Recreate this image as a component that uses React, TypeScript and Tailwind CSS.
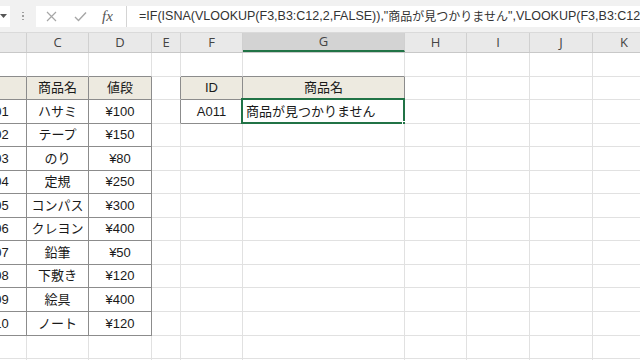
import React from "react";

const cols = [
  { key: "B", w: "w-[66px]" },
  { key: "C", w: "w-[62px]" },
  { key: "D", w: "w-[63px]" },
  { key: "E", w: "w-[29px]" },
  { key: "F", w: "w-[62px]" },
  { key: "G", w: "w-[162px]" },
  { key: "H", w: "w-[62px]" },
  { key: "I", w: "w-[63px]" },
  { key: "J", w: "w-[63px]" },
  { key: "K", w: "w-[63px]" },
];

const items = [
  ["A001", "ハサミ", "¥100"],
  ["A002", "テープ", "¥150"],
  ["A003", "のり", "¥80"],
  ["A004", "定規", "¥250"],
  ["A005", "コンパス", "¥300"],
  ["A006", "クレヨン", "¥400"],
  ["A007", "鉛筆", "¥50"],
  ["A008", "下敷き", "¥120"],
  ["A009", "絵具", "¥400"],
  ["A010", "ノート", "¥120"],
];

// row 1..14, col index 0..9 (B..K)
function cellValue(r: number, c: number): string {
  if (r === 2) {
    if (c === 0) return "ID";
    if (c === 1) return "商品名";
    if (c === 2) return "値段";
    if (c === 4) return "ID";
    if (c === 5) return "商品名";
  }
  if (r >= 3 && r <= 12 && c <= 2) return items[r - 3][c];
  if (r === 3 && c === 4) return "A011";
  return "";
}

function inTable(r: number, c: number) {
  return (r >= 2 && r <= 12 && c <= 2) || (r >= 2 && r <= 3 && (c === 4 || c === 5));
}

function borderClass(r: number, c: number) {
  const right = inTable(r, c) || inTable(r, c + 1);
  const bottom = inTable(r, c) || inTable(r + 1, c);
  if (right && bottom) return "border-r border-b border-r-[#8c8c8c] border-b-[#8c8c8c]";
  if (right) return "border-r border-b border-r-[#8c8c8c] border-b-[#e1e1e1]";
  if (bottom) return "border-r border-b border-r-[#e1e1e1] border-b-[#8c8c8c]";
  return "border-r border-b border-r-[#e1e1e1] border-b-[#e1e1e1]";
}

function Cell({ r, c }: { r: number; c: number }) {
  const header = r === 2 && inTable(r, c);
  const selected = r === 3 && c === 5;
  return (
    <div
      className={`${cols[c].w} shrink-0 relative flex items-center ${
        selected ? "justify-start pl-[3px]" : "justify-center"
      } ${header ? "bg-[#edeae0]" : "bg-white"} ${borderClass(r, c)}`}
    >
      <span className="whitespace-nowrap">{selected ? "商品が見つかりません" : cellValue(r, c)}</span>
      {selected && (
        <div className="absolute left-[-2px] top-[-2px] right-[-1px] bottom-[-1px] border-2 border-[#217346]">
          <div className="absolute right-[-4px] bottom-[-4px] w-[5px] h-[5px] bg-[#217346] border border-white" />
        </div>
      )}
    </div>
  );
}

export default function App() {
  const rows = Array.from({ length: 14 }, (_, i) => i + 1);
  return (
    <div className="w-[640px] h-[360px] overflow-hidden bg-white text-[#1a1a1a] font-['Liberation_Sans','Noto_Sans_CJK_JP',sans-serif]">
      {/* formula bar */}
      <div className="h-[33px] bg-[#f1f1f1] flex items-center border-b border-[#dadada] overflow-hidden">
        <div className="w-[10px] shrink-0 h-[21px] bg-white flex items-center">
          <svg width="7" height="4" viewBox="0 0 7 4">
            <path d="M0 0 L7 0 L3.5 4 Z" fill="#555" />
          </svg>
        </div>
        <div className="w-[26px] shrink-0 flex flex-col items-center justify-center gap-[2px]">
          <span className="w-[1.5px] h-[1.5px] bg-[#a0a0a0]" />
          <span className="w-[1.5px] h-[1.5px] bg-[#a0a0a0]" />
          <span className="w-[1.5px] h-[1.5px] bg-[#a0a0a0]" />
        </div>
        <div className="flex-1 min-w-0 h-[21px] bg-white flex items-center overflow-hidden">
          <div className="w-[91px] shrink-0 flex items-center h-full border-r border-[#d4d4d4]">
            <svg width="11" height="11" viewBox="0 0 11 11" className="ml-[10px]">
              <path d="M1 1 L10 10 M10 1 L1 10" stroke="#a6a6a6" strokeWidth="1.2" />
            </svg>
            <svg width="13" height="11" viewBox="0 0 13 11" className="ml-[17px]">
              <path d="M1 6 L4.5 9.5 L12 1.5" stroke="#a6a6a6" strokeWidth="1.4" fill="none" />
            </svg>
            <span className="ml-[15px] text-[15px] italic text-[#555] font-['Liberation_Serif',serif] leading-none">fx</span>
          </div>
          <div className="shrink-0 pl-[12px] text-[12.5px] text-[#333] whitespace-nowrap font-['Liberation_Sans',sans-serif] flex items-center">
            <span>=IF(ISNA(VLOOKUP(F3,B3:C12,2,FALSE)),"</span>
            <span className="text-[12px] font-['Noto_Sans_CJK_JP',sans-serif]">商品が見つかりません</span>
            <span>",VLOOKUP(F3,B3:C12,2,FALSE))</span>
          </div>
        </div>
      </div>

      {/* column headers */}
      <div className="flex h-[20px] bg-[#e9e9e9] border-b border-[#c8c8c8] ml-[-39px] text-[13px] text-[#444] font-['Open_Sans',sans-serif]">
        {cols.map((col, i) => (
          <div
            key={col.key}
            className={`${col.w} shrink-0 flex items-center justify-center border-r border-[#d0d0d0] ${
              i === 5 ? "bg-[#d3d3d3] border-b-2 border-b-[#217346]" : ""
            }`}
          >
            {col.key}
          </div>
        ))}
      </div>

      {/* grid */}
      <div className="ml-[-39px] text-[13px]">
        {rows.map((r) => (
          <div key={r} className="flex h-[23.55px]">
            {cols.map((col, c) => (
              <Cell key={col.key} r={r} c={c} />
            ))}
          </div>
        ))}
      </div>
    </div>
  );
}
